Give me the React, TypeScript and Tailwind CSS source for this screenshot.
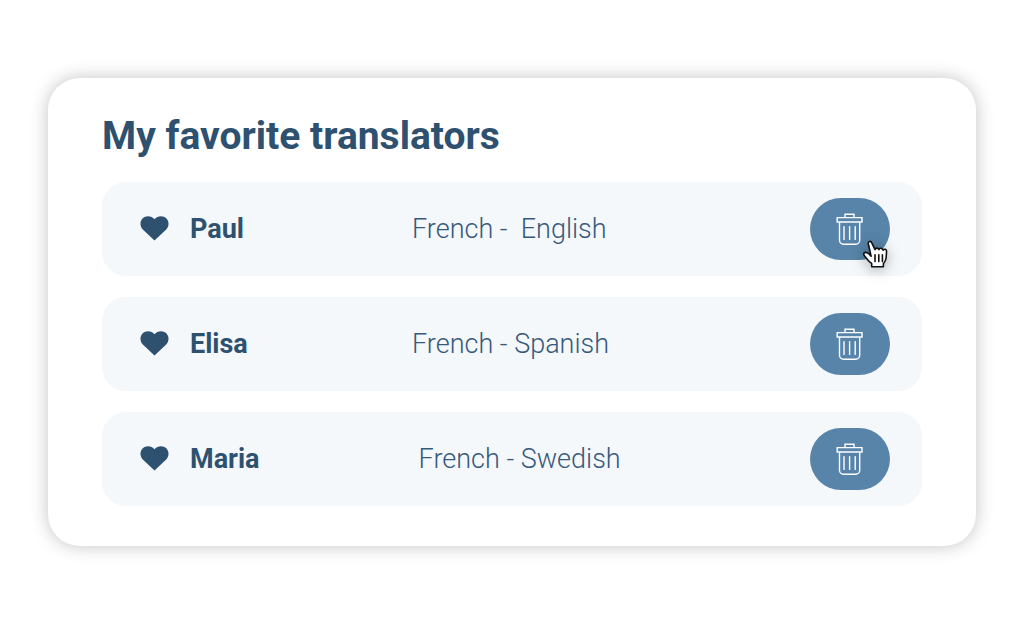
type Translator = {
  name: string;
  languages: string;
  isHovered?: boolean;
};

const translators: Translator[] = [
  { name: "Paul", languages: "French -  English", isHovered: true },
  { name: "Elisa", languages: "French - Spanish" },
  { name: "Maria", languages: " French - Swedish" },
];

const HeartIcon = () => (
  <svg
    aria-hidden="true"
    viewBox="0 0 29 26"
    className="h-[26px] w-[29px] shrink-0"
    fill="currentColor"
  >
    <path d="M14.5 24.6 2.8 13.6C-.3 10.4-.2 5.2 2.5 2.4 5.8-.8 11.6-.5 14.5 3.3 17.4-.5 23.2-.8 26.5 2.4c2.7 2.8 2.8 8-.3 11.2z" />
  </svg>
);

const TrashIcon = () => (
  <svg
    aria-hidden="true"
    viewBox="0 0 28 34"
    className="h-[34px] w-7"
    fill="none"
    stroke="currentColor"
    strokeWidth="1.4"
  >
    <path d="M9 5.6V2.2h9v3.4" />
    <path d="M1.2 5.6h24.8V10H1.2z" />
    <path d="M3.5 10v18.2a4 4 0 0 0 4 4h12.2a4 4 0 0 0 4-4V10" />
    <path d="M8 14.6v12.8M13.6 14.6v12.8M19.2 14.6v12.8" strokeLinecap="round" />
  </svg>
);

const HandCursor = () => (
  <svg
    aria-hidden="true"
    viewBox="0 0 26 28"
    className="pointer-events-none absolute top-[42px] left-[52px] h-7 w-[26px] drop-shadow-[0_2px_7px_rgba(0,0,0,0.3)]"
    fill="white"
    stroke="#111"
    strokeWidth="1.6"
    strokeLinejoin="round"
    strokeLinecap="round"
  >
    <path d="M9.1 16.1 7 13.9C5.4 12.4 3 11.8 1.9 13.2c-.9 1.2.3 2.3 1.3 3.5l3.3 4c1 1.2 2 1.9 3.2 2.9v3.2h11.7v-3c1.6-2 2.4-3.5 2.7-5.8l.5-6.7c0-2.2-2.5-2.8-3.6-1.1-.4-2.4-3.4-2.6-4-.6-.8-2.1-3.5-1.9-4 0L9.8 2.8C8.9.5 5.9 1.2 6.3 3.7z" />
    <path d="M13 14.8v6.8M16.8 14.8v6.8M20.4 14.8v6.8" />
  </svg>
);

const TranslatorRow = ({ name, languages, isHovered }: Translator) => (
  <li className="flex h-[94px] items-center rounded-3xl bg-[#f4f8fb] pr-8 pl-[38px]">
    <HeartIcon />
    <span className="ml-[21px] w-[222px] shrink-0 text-[27px] leading-8 font-bold">
      {name}
    </span>
    <span className="grow text-[27px] leading-8 font-light whitespace-pre text-[#37597b]">
      {languages}
    </span>
    <button
      type="button"
      aria-label={`Remove ${name} from favorites`}
      className="relative flex h-[62px] w-20 shrink-0 cursor-pointer items-center justify-center rounded-full bg-[#5784a8] text-white"
    >
      <TrashIcon />
      {isHovered ? <HandCursor /> : null}
    </button>
  </li>
);

const App = () => {
  return (
    <main className="flex min-h-screen items-center bg-white p-12 font-['Roboto',sans-serif] text-[#2f5170]">
      <section className="w-full rounded-[32px] bg-white px-[54px] pt-8 pb-10 shadow-[0_0_18px_rgba(0,0,0,0.24)]">
        <h1 className="text-[39px] leading-[52px] font-bold">
          My favorite translators
        </h1>
        <ul className="mt-5 flex flex-col gap-[21px]">
          {translators.map((translator) => (
            <TranslatorRow key={translator.name} {...translator} />
          ))}
        </ul>
      </section>
    </main>
  );
};

export default App;
